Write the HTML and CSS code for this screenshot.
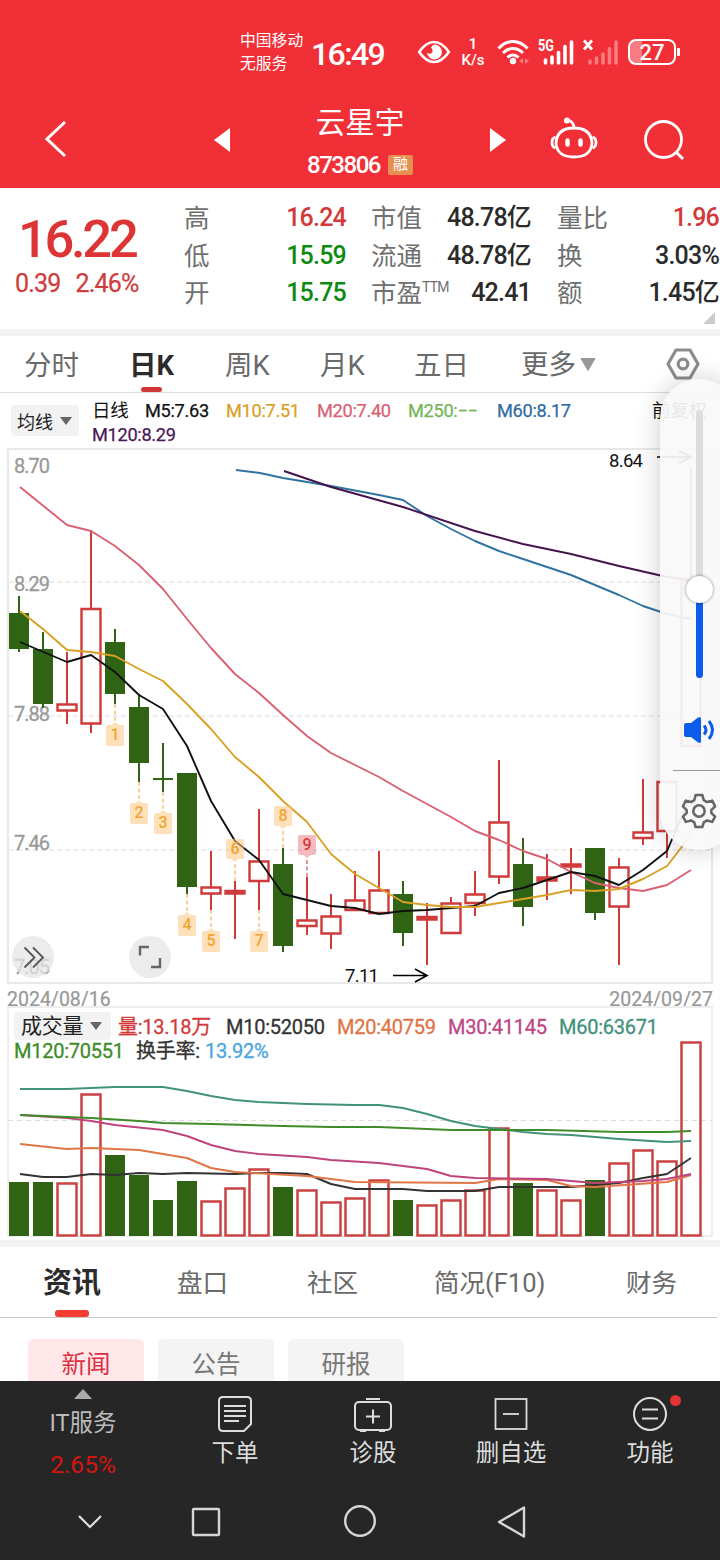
FILE: index.html
```html
<!DOCTYPE html>
<html lang="zh-CN">
<head>
<meta charset="utf-8">
<title>云星宇 873806</title>
<link rel="stylesheet" href="styles.css">
</head>
<body>
<div class="app">
  <header class="top">
    <div class="status">
      <div class="carrier"><span>中国移动</span><span>无服务</span></div>
      <div class="clock">16:49</div>
      <svg class="eye" width="34" height="26" viewBox="0 0 34 26"><path d="M2.200 13Q9 3 17 3t14.800 10Q25 23 17 23T2.200 13z" fill="none" stroke="#fff" stroke-width="2.600"/><path d="M18 5.500a7.500 7.500 0 1 1-8 8c2 2 5 1.500 5.500-1 .4-2-.5-3-1.500-4 1-1.500 2-2.800 4-3z" fill="#fff"/></svg>
      <div class="speed"><span>1</span><span>K/s</span></div>
      <svg class="wifi" width="32" height="26" viewBox="0 0 32 26"><g fill="none" stroke="#fff" stroke-width="3"><path d="M1.500 9.500Q8 2.500 16 2.500t14.500 7M6 14q4.500-4.500 10-4.500T26 14M10.500 18.500q2.500-2.500 5.500-2.500t5.500 2.500"/></g><circle cx="16" cy="22" r="3.200" fill="#fff"/><path d="M26 19v6l-4-3zM28 19v6l4-3z" fill="#f77b80"/></svg>
      <svg class="sig" width="36" height="28" viewBox="0 0 36 28"><g stroke="#fff" stroke-width="3.600" stroke-linecap="round"><path d="M7.500 22v3M14 19v6M20.500 14.500V25M27 8.500V25M33.500 4v21"/></g><text x="0" y="13" class="sig-text" textLength="16" lengthAdjust="spacingAndGlyphs">5G</text></svg>
      <svg class="sig2" width="36" height="28" viewBox="0 0 36 28"><g stroke="#f77b80" stroke-width="3.600" stroke-linecap="round"><path d="M7 23v2M13.500 20v5M20 16v9M26.500 10.500V25M33 4v21"/></g><path d="M1 2.500l8 9M9 2.500l-8 9" stroke="#fff" stroke-width="2.800"/></svg>
      <div class="battery">27</div>
    </div>
    <div class="titlebar">
      <svg class="back" width="24" height="40" viewBox="0 0 24 40"><path d="M21 3L3 20l18 17" fill="none" stroke="#fff" stroke-width="3"/></svg>
      <svg class="prev" width="16" height="24" viewBox="0 0 16 24"><path d="M16 0v24L0 12z" fill="#fff"/></svg>
      <div class="name"><h1>云星宇</h1><p><span class="code">873806</span><span class="tag">融</span></p></div>
      <svg class="next" width="16" height="24" viewBox="0 0 16 24"><path d="M0 0v24l16-12z" fill="#fff"/></svg>
      <svg class="robot" width="48" height="44" viewBox="0 0 48 44"><g fill="none" stroke="#fff" stroke-width="2.800"><path d="M24 11q17 0 18 15-1 14-18 14T6 26q1-15 18-15zM24 11q0-6-6-8"/><path d="M5.500 20q-3.500 1-3.500 5.500T5.500 31M42.500 20q3.500 1 3.500 5.500T42.500 31"/></g><circle cx="17" cy="3.500" r="3" fill="#fff"/><path d="M17.500 23.500v4M30.500 23.500v4" stroke="#fff" stroke-width="4.500" stroke-linecap="round"/></svg>
      <svg class="search" width="42" height="42" viewBox="0 0 42 42"><circle cx="20.500" cy="20.500" r="18" fill="none" stroke="#fff" stroke-width="2.800"/><path d="M33 33l7 7" stroke="#fff" stroke-width="3"/></svg>
    </div>
  </header>

  <section class="quote">
    <div class="price"><div class="last">16.22</div><div class="chg"><span>0.39</span><span>2.46%</span></div></div>
    <dl class="stats">
      <dt>高</dt><dd class="up">16.24</dd><dt>市值</dt><dd>48.78亿</dd><dt>量比</dt><dd class="up">1.96</dd>
      <dt>低</dt><dd class="down">15.59</dd><dt>流通</dt><dd>48.78亿</dd><dt>换</dt><dd>3.03%</dd>
      <dt>开</dt><dd class="down">15.75</dd><dt>市盈<sup>TTM</sup></dt><dd>42.41</dd><dt>额</dt><dd>1.45亿</dd>
    </dl>
    <i class="corner"></i>
  </section>

  <nav class="periods">
    <span>分时</span><span class="on">日K</span><span>周K</span><span>月K</span><span>五日</span><span class="more">更多<svg width="16" height="13" viewBox="0 0 16 13"><path d="M1 .5h14L8 12.500z" fill="#999" stroke="#999"/></svg></span>
    <svg class="hex" width="34" height="34" viewBox="0 0 34 34"><g fill="none" stroke="#8c8c8c" stroke-width="3.200" stroke-linejoin="round"><path d="M10 3h14l8 14-8 14H10L2 17z"/><circle cx="17" cy="17" r="4.800"/></g></svg>
  </nav>

  <section class="ma">
    <div class="drop">均线<i></i></div>
    <div class="ma-list">
      <div class="ma-row"><span class="cn">日线</span><span>M5:7.63</span><span class="c10">M10:7.51</span><span class="c20">M20:7.40</span><span class="c250">M250:−−</span><span class="c60">M60:8.17</span><span class="cn adj">前复权</span></div>
      <div class="ma-row"><span class="c120">M120:8.29</span></div>
    </div>
  </section>

  <svg class="kline" width="720" height="538" viewBox="0 448 720 538">
    <g fill="none" stroke="#e8e8e8"><path d="M8 449H712V983H8z" stroke-width="2"/><path d="M9 582H711M9 716H711M9 850H711" stroke-width="1.500" stroke-dasharray="5 3"/></g>
    <g class="axis"><text x="14" y="473" textLength="36">8.70</text><text x="14" y="591" textLength="36">8.29</text><text x="14" y="721" textLength="36">7.88</text><text x="14" y="850" textLength="36">7.46</text><text x="14" y="974" textLength="36">7.05</text></g>
    <g stroke="#cf3a3a" stroke-width="2" fill="none">
      <path d="M67 652V704M67 711V724M91 530V609M91 724V733M211 851V887M211 894V910M235 881V939M259 809V861M259 881V910M307 877V920M307 926V935M331 894V916M331 934V949M355 871V900M379 851V890M427 903V965M451 897V903M475 871V894M475 903V916M499 760V822M499 877V884M547 854V900M571 848V894M619 858V867M619 906V965M643 779V832M643 838V845M667 831V858M691 467V581"/>
      <path stroke-width="2.400" d="M57.500 704.500h19v6h-19zM81.500 609h19v114.500h-19zM201.500 887.500h19v6h-19zM249.500 861.500h19v19.500h-19zM297.500 920.500h19v5.500h-19zM321.500 916.500h19v17h-19zM345.500 900.500h19v9.500h-19zM369.500 890.500h19v22.500h-19zM441.500 903.500h19v29.500h-19zM465.500 894.500h19v8.500h-19zM489.500 822.500h19v54h-19zM609.500 867.500h19v39h-19zM633.500 832.500h19v5.500h-19zM657.500 782h19v49h-19zM681.500 581h19v165h-19z"/>
      <path stroke-width="2.400" fill="#f25555" d="M225.500 891h19v2.500h-19zM417.500 917h19v2.500h-19zM537.500 877.500h19v3h-19zM561.500 864.500h19v2h-19z"/>
    </g>
    <g fill="#2f6414">
      <path d="M9 613h20v36H9zM33 649h20v55H33zM105 642h20v52h-20zM129 707h20v56h-20zM153 778h20v2h-20zM177 773h20v114h-20zM273 864h20v82h-20zM393 894h20v39h-20zM513 864h20v43h-20zM585 848h20v65h-20z"/>
      <path stroke="#2f6414" stroke-width="2" d="M19 596v56M43 632v76M115 629v75M139 694v88M163 743v49M187 880v14M283 848v104M403 881v65M523 838v88M595 900v20"/>
    </g>
    <g class="lines">
      <polyline stroke="#2f739f" points="236,470 260,473 283,478 331,486 379,495 403,500 427,516 451,529 475,541 499,551 523,559 571,575 595,585 619,595 643,606 667,614 691,619"/>
      <polyline stroke="#45144d" points="284,471 331,487 403,507 475,531 523,544 571,554 619,566 667,577 691,580"/>
      <polyline stroke="#da6072" points="20,487 67,525 91,531 115,546 139,565 163,589 187,619 211,648 235,674 259,693 283,715 307,736 331,753 355,765 379,777 403,791 427,804 451,817 475,831 499,840 523,851 547,859 571,872 595,883 619,888 643,891 667,885 691,870"/>
      <polyline stroke="#111" points="20,642 67,662 91,655 115,672 139,695 163,709 187,746 211,801 235,841 259,860 283,894 307,900 331,906 355,908 379,914 403,911 427,910 451,908 475,906 499,893 523,888 547,880 571,872 595,876 619,885 643,870 667,851 691,795"/>
      <polyline stroke="#d9a025" points="20,611 43,629 67,650 91,652 115,656 139,669 163,681 187,704 211,729 235,757 259,777 283,801 307,822 331,854 355,874 379,888 403,902 427,905 451,907 475,907 499,903 523,899 547,895 571,890 595,891 619,889 643,879 667,866 691,835"/>
    </g>
    <g fill="none" stroke-width="1.700" stroke-dasharray="4 2.500"><path stroke="#f6c98c" d="M115 704v18M139 782v18M163 792v18M187 894v18M211 910v18M259 910v18M235 881v-19M283 848v-19"/><path stroke="#e08585" d="M307 877v-19"/></g>
    <defs>
      <path id="up" d="M0 0l3.500 3H7q2 0 2 2v17q0 2-2 2H-7q-2 0-2-2V5q0-2 2-2h3.500z"/>
      <path id="dn" d="M0 0l3.500-3H7q2 0 2-2v-16q0-2-2-2H-7q-2 0-2 2v16q0 2 2 2h3.500z"/>
    </defs>
    <g fill="#fdc982" fill-opacity=".55"><use href="#up" x="115" y="722"/><use href="#up" x="139" y="800"/><use href="#up" x="163" y="810"/><use href="#up" x="187" y="912"/><use href="#up" x="211" y="928"/><use href="#up" x="259" y="928"/><use href="#dn" x="235" y="862"/><use href="#dn" x="283" y="829"/></g>
    <use href="#dn" x="307" y="858" fill="#ea7a7f" fill-opacity=".5"/>
    <g class="nine"><text x="115" y="740">1</text><text x="139" y="818">2</text><text x="163" y="828">3</text><text x="187" y="930">4</text><text x="211" y="946">5</text><text x="235" y="854">6</text><text x="259" y="946">7</text><text x="283" y="821">8</text><text x="307" y="850" class="hot">9</text></g>
    <g class="mark"><text x="609" y="467" textLength="34">8.64</text><text x="345" y="982" textLength="34">7.11</text></g>
    <path d="M393 975.500h33M415 969l12 6.500-12 6.500M657 457h33M679 451l12 6-12 6" fill="none" stroke="#000" stroke-width="1.700"/>
    <g fill="#e6e6e6" fill-opacity=".75"><circle cx="33" cy="957" r="21"/><circle cx="150" cy="957" r="21"/></g>
    <path d="M24.500 947.500l10 10-10 10M33 947.500l10 10-10 10" fill="none" stroke="#555" stroke-width="1.800"/>
    <path d="M140 955.500v-8.500h9M151 967h9v-9" fill="none" stroke="#666" stroke-width="2.400"/>
  </svg>

  <div class="dates"><span>2024/08/16</span><span>2024/09/27</span></div>

  <section class="vol">
    <div class="vol-row first"><span class="drop">成交量<i></i></span><span class="vred">量:13.18万</span><span>M10:52050</span><span class="v20">M20:40759</span><span class="v30">M30:41145</span><span class="v60">M60:63671</span></div>
    <div class="vol-row second"><span class="v120">M120:70551</span><span>换手率:</span><span class="rate">13.92%</span></div>
    <svg class="bars" width="720" height="176" viewBox="0 1062 720 176">
      <path d="M8 1236V1007H712V1236z" fill="none" stroke="#eee" stroke-width="2"/>
      <path d="M8 1120.500H712" stroke="#ddd" stroke-dasharray="5 4"/>
      <path fill="#2f6414" d="M9 1182h20v54H9zM33 1182h20v54H33zM105 1155h20v81h-20zM129 1175h20v61h-20zM153 1200h20v36h-20zM177 1181h20v55h-20zM273 1187h20v49h-20zM393 1200h20v36h-20zM513 1183h20v53h-20zM585 1180h20v56h-20z"/>
      <path fill="none" stroke="#ca4343" stroke-width="2.500" d="M57.500 1183.500h19v52h-19zM81.500 1094.500h19v141h-19zM201.500 1201.500h19v34h-19zM225.500 1188.500h19v47h-19zM249.500 1169.500h19v66h-19zM297.500 1190.500h19v45h-19zM321.500 1202.500h19v33h-19zM345.500 1198.500h19v37h-19zM369.500 1180.500h19v55h-19zM417.500 1205.500h19v30h-19zM441.500 1200.500h19v35h-19zM465.500 1190.500h19v45h-19zM489.500 1128.500h19v107h-19zM537.500 1190.500h19v45h-19zM561.500 1200.500h19v35h-19zM609.500 1163.500h19v72h-19zM633.500 1150.500h19v85h-19zM657.500 1161.500h19v74h-19zM681.500 1042.500h19v193h-19z"/>
      <g class="lines">
        <polyline stroke="#333" points="20,1174 43,1177 67,1177 91,1174 115,1175 139,1173 163,1174 187,1173 235,1174 259,1173 283,1173 307,1174 331,1184 355,1189 403,1189 427,1191 475,1191 499,1187 571,1187 619,1183 643,1178 667,1174 691,1158"/>
        <polyline stroke="#e07546" points="20,1144 67,1149 91,1148 139,1150 187,1158 211,1168 235,1172 307,1176 355,1182 475,1183 499,1179 547,1180 571,1186 595,1187 667,1182 691,1175"/>
        <polyline stroke="#be457c" points="20,1115 67,1118 91,1121 115,1125 163,1130 187,1136 211,1145 235,1151 259,1154 307,1157 331,1160 379,1163 427,1169 451,1176 475,1178 547,1179 571,1181 595,1183 643,1181 667,1179 691,1174"/>
        <polyline stroke="#42927a" points="20,1089 67,1089 115,1087 163,1087 187,1091 211,1096 235,1100 259,1102 307,1104 355,1105 379,1105 403,1108 427,1114 451,1121 475,1126 499,1129 523,1132 547,1134 571,1135 619,1139 667,1142 691,1141"/>
        <polyline stroke="#408b2a" points="20,1115 91,1118 139,1121 163,1123 211,1124 283,1126 331,1127 379,1127 451,1130 547,1130 619,1132 667,1132 691,1131"/>
      </g>
    </svg>
  </section>

  <nav class="info-tabs"><span class="on">资讯</span><span>盘口</span><span>社区</span><span>简况(F10)</span><span>财务</span></nav>
  <div class="chips"><span class="on">新闻</span><span>公告</span><span>研报</span></div>

  <footer class="dock">
    <div class="actions">
      <div class="index"><svg width="18" height="10" viewBox="0 0 18 10"><path d="M9 0l9 10H0z" fill="#aaa"/></svg><span>IT服务</span><b>2.65%</b></div>
      <div class="act"><svg width="40" height="38" viewBox="0 0 40 38"><g fill="none" stroke="#ddd" stroke-width="2"><path d="M8 2h24q4 0 4 4v23l-7 7H8q-4 0-4-4V6q0-4 4-4z"/><path d="M9 11h22M9 16h22M9 21h22M9 26h15"/></g></svg><span>下单</span></div>
      <div class="act"><svg width="40" height="38" viewBox="0 0 40 38"><g fill="none" stroke="#ddd" stroke-width="2"><rect x="2" y="7" width="36" height="28" rx="4"/><path d="M13 4h14M20 14.500v14M13 21.500h14M7 36h6M26 36h6"/></g></svg><span>诊股</span></div>
      <div class="act"><svg width="40" height="38" viewBox="0 0 40 38"><g fill="none" stroke="#ddd" stroke-width="1.800"><rect x="4.500" y="4" width="31" height="30"/><path d="M12 19h16"/></g></svg><span>删自选</span></div>
      <div class="act"><svg width="40" height="38" viewBox="0 0 40 38"><g fill="none" stroke="#ddd" stroke-width="2"><circle cx="20" cy="19" r="16"/><path d="M12 14.500h16M12 23.500h16"/></g></svg><span>功能</span><i class="dot"></i></div>
    </div>
    <div class="keys">
      <svg width="26" height="36" viewBox="0 0 26 36"><path d="M2 12l11 11 11-11" fill="none" stroke="#ddd" stroke-width="2.200"/></svg>
      <svg width="36" height="36" viewBox="0 0 36 36"><rect x="5" y="5" width="26" height="26" rx="1" fill="none" stroke="#d6d6d6" stroke-width="2.400"/></svg>
      <svg width="36" height="36" viewBox="0 0 36 36"><circle cx="18" cy="17" r="14.800" fill="none" stroke="#d6d6d6" stroke-width="2.400"/></svg>
      <svg width="36" height="36" viewBox="0 0 36 36"><path d="M30 3.500v29L5 18z" fill="none" stroke="#d6d6d6" stroke-width="2.400" stroke-linejoin="round"/></svg>
    </div>
  </footer>

  <aside class="volume-panel">
    <div class="track"><div class="level"></div><div class="knob"></div></div>
    <svg class="speaker" width="34" height="26" viewBox="0 0 34 26"><path d="M1 8q0-2 2-2h5l7-5.500q3-1 3 1v23q0 2-3 1L8 20H3q-2 0-2-2z" fill="#0d5bea"/><path d="M21 8.500q4 4.500 0 9M26 4q7 9 0 18" fill="none" stroke="#0d5bea" stroke-width="3"/></svg>
    <hr>
    <svg class="gear" width="34" height="36" viewBox="0 0 36 38"><g fill="none" stroke="#666" stroke-width="2.700" stroke-linejoin="round"><path d="M14.500 2h7l1.500 5.500 3.500 2 5.500-1.500 3 6-4 4v3l4 4-3 5.500-5.500-1.500-3.500 2-1.500 5h-7L13 31l-3.500-2L4 30.500 1 25l4-4v-3l-4-4 3-6 5.500 1.500 3.500-2z"/><circle cx="18" cy="19" r="6"/></g></svg>
  </aside>
</div>
</body>
</html>
```
FILE: styles.css
```css
* { box-sizing: border-box; }
body { margin: 0; background: #fff; font-family: Roboto, "Noto Sans CJK SC", sans-serif; }
h1, p, dl, dd { margin: 0; }
svg { display: block; flex: none; overflow: visible; }
.app { position: relative; width: 720px; height: 1560px; overflow: hidden; display: flex; flex-direction: column; color: #333; white-space: nowrap; }
.app > * { flex: none; }

.top { height: 188px; background: #f12f37; color: #fff; }
.status { display: flex; align-items: center; height: 104px; padding-left: 240px; }
.carrier { display: flex; flex-direction: column; width: 71px; font-size: 15.800px; line-height: 23px; }
.clock { width: 106px; font-size: 32px; font-weight: 500; letter-spacing: -1.600px; line-height: 34px; padding-top: 3px; }
.speed { display: flex; flex-direction: column; align-items: center; gap: 2px; width: 26px; margin-left: 9px; font-size: 15px; line-height: 14px; font-weight: 500; }
.speed span { height: 14px; }
.wifi { margin-left: 11px; }
.sig { margin-left: 9px; }
.sig-text { font: 700 16px Roboto, sans-serif; fill: #fff; }
.sig2 { margin-left: 9px; }
.battery { position: relative; width: 48px; height: 26px; margin-left: 9px; border: 2px solid #fff; border-radius: 8px; background: linear-gradient(90deg, #f77c81 28%, transparent 28%); font-size: 22px; line-height: 23px; font-weight: 500; text-align: center; }
.battery::after { content: ""; position: absolute; right: -6px; top: 7px; width: 3px; height: 8px; border-radius: 1px; background: #fff; }
.titlebar { display: grid; grid-template-columns: 44px 170px 62px 168px 45px 62px 92px 42px; height: 84px; }
.back { grid-column: 2; margin-top: 15px; }
.prev { grid-column: 3; margin-top: 24px; }
.name { grid-column: 4; text-align: center; }
.name h1 { font-size: 29.500px; line-height: 38px; font-weight: 400; }
.name p { display: flex; justify-content: center; align-items: center; height: 46px; }
.code { font-size: 24px; font-weight: 500; letter-spacing: -1.500px; }
.tag { margin-left: 8px; width: 25px; height: 20px; border-radius: 2px; background: #e5904f; font-size: 15px; line-height: 19px; }
.next { grid-column: 5; margin: 24px 0 0 46px; }
.robot { grid-column: 6; margin: 13px 0 0 61px; }
.search { grid-column: 7; margin: 15px 0 0 92px; }

.quote { position: relative; display: grid; grid-template-columns: 184px 536px; height: 148px; border-bottom: 7px solid #f3f3f3; }
.price { color: #dd3436; }
.last { padding: 23px 0 0 18px; font-size: 52.500px; line-height: 56px; font-weight: 500; letter-spacing: -3.300px; }
.chg { display: flex; gap: 15px; padding: 2px 0 0 15px; font-size: 25px; line-height: 30px; letter-spacing: -.8px; color: #cf3e3e; font-weight: 400; -webkit-text-stroke: .25px; }
.stats { display: grid; grid-template-columns: 87px 75px 25px 75px 85px 26px 60px 102px; grid-template-rows: repeat(3, 37.500px); padding-top: 11px; }
.stats dt, .stats dd { line-height: 38px; }
.stats dt { font-size: 25.500px; color: #707070; font-weight: 400; }
.stats dd { text-align: right; font-size: 25px; font-weight: 500; letter-spacing: -.8px; color: #2b2b2b; }
.stats dt:nth-of-type(3n+1) { grid-column: 1; }
.stats dd:nth-of-type(3n+1) { grid-column: 2; }
.stats dt:nth-of-type(3n+2) { grid-column: 4; }
.stats dd:nth-of-type(3n+2) { grid-column: 5; }
.stats dt:nth-of-type(3n) { grid-column: 7; }
.stats dd:nth-of-type(3n) { grid-column: 8; }
.stats sup { font-size: 14px; line-height: 0; vertical-align: 10px; letter-spacing: -.8px; }
.stats dd.up { color: #d23a3a; }
.stats dd.down { color: #0e8a10; }
.corner { position: absolute; right: 5px; bottom: 5px; border-left: 12px solid transparent; border-bottom: 12px solid #ccc; }

.periods { display: grid; grid-template-columns: 105px 96px 95px 94px 107px 145px 34px; height: 57px; padding-left: 24px; border-bottom: 1px solid #ddd; font-size: 27.500px; line-height: 59px; font-weight: 400; color: #6a6a6a; }
.periods span { position: relative; }
.periods .on { font-weight: 700; color: #2b2b2b; }
.periods .on::after { content: ""; position: absolute; left: 12px; top: 51px; width: 21px; height: 5px; border-radius: 3px; background: #d13536; }
.periods .more { display: flex; align-items: center; gap: 4px; height: 57px; }
.hex { margin-top: 11px; }

.ma { display: flex; height: 55px; padding-left: 11px; }
.drop { display: flex; align-items: center; background: #f2f2f2; border-radius: 4px; color: #222; }
.drop i { border: 6.500px solid transparent; border-top: 8px solid #666; border-bottom: 0; }
.ma > .drop { width: 68px; height: 31px; margin-top: 12px; padding-left: 6px; gap: 7px; font-size: 18px; }
.ma-list { padding: 6px 0 0 13px; }
.ma-row { display: grid; grid-template-columns: 53px 81px 91px 91px 89px 155px auto; height: 24px; line-height: 24px; font-size: 18.500px; letter-spacing: -.3px; color: #111; }
.ma-row span:not(.cn) { font-weight: 400; font-size: 18.200px; -webkit-text-stroke: .25px; }
.c10 { color: #d9a025; } .c20 { color: #da6072; } .c250 { color: #72b558; } .c60 { color: #2f6d9f; } .c120 { color: #4c1757; }

.axis text { font: 400 20px Roboto, sans-serif; fill: #999; stroke: #999; stroke-width: .3px; }
.kline { height: 538px; }
.lines polyline { fill: none; stroke-width: 1.900; stroke-linejoin: round; }
.nine text { font: 500 16px Roboto, sans-serif; fill: #f0a431; text-anchor: middle; }
.nine .hot { fill: #d83a3c; }
.mark text { font: 400 18.500px Roboto, sans-serif; fill: #111; }

.dates { display: flex; justify-content: space-between; height: 20px; padding: 2px 7px 0; font-size: 19.500px; line-height: 23px; color: #999; letter-spacing: 0; -webkit-text-stroke: .25px; }

.vol { height: 241px; border-bottom: 7px solid #f3f3f3; display: flex; flex-direction: column; }
.vol-row { display: grid; position: relative; z-index: 1; padding-left: 14px; font-size: 20px; letter-spacing: -.25px; }
.first { grid-template-columns: 104px 108px 111px 111px 111px auto; height: 34px; padding-top: 6px; line-height: 30px; }
.first .drop { width: 97px; height: 28px; padding-left: 7px; gap: 7px; font-size: 21px; }
.second { grid-template-columns: 122px 69px auto; height: 22px; line-height: 22px; }
.vol-row span:not(.drop) { font-weight: 400; -webkit-text-stroke: .3px; }
.vred { color: #d23a3a; } .v20 { color: #df7443; } .v30 { color: #bf4585; } .v60 { color: #42917b; } .v120 { color: #408b2a; } .rate { color: #4ba5df; }

.info-tabs { display: grid; grid-template-columns: 134px 130px 127px 192px auto; width: 717px; height: 71px; padding-left: 43px; border-bottom: 1px solid #c8c8c8; font-size: 25.500px; line-height: 72px; font-weight: 400; color: #6a6a6a; }
.info-tabs span { position: relative; }
.info-tabs .on { font-size: 29px; font-weight: 700; color: #2b2b2b; }
.info-tabs .on::after { content: ""; position: absolute; left: 12px; top: 63px; width: 34px; height: 7px; border-radius: 3px; background: #f33c32; }
.chips { display: flex; gap: 14px; height: 63px; padding: 21px 0 0 28px; }
.chips span { width: 116px; border-radius: 6px 6px 0 0; background: #f4f4f4; text-align: center; font-size: 24.500px; line-height: 51px; color: #777; }
.chips .on { background: #ffe7ea; color: #dd2f3f; }

.dock { position: relative; height: 179px; background: #262626; color: #ddd; }
.actions { display: grid; grid-template-columns: 166px 138px 138px 138px 140px; height: 117px; }
.index { display: flex; flex-direction: column; align-items: center; padding-top: 8px; font-size: 23.500px; color: #bbb; }
.index span { line-height: 48px; }
.index b { font-size: 24.500px; font-weight: 400; line-height: 36px; color: #d3160f; }
.act { position: relative; display: flex; flex-direction: column; align-items: center; padding-top: 14px; font-size: 23.500px; line-height: 40px; }
.dot { position: absolute; right: 39px; top: 14px; width: 11px; height: 11px; border-radius: 50%; background: #e33434; }
.keys { display: grid; grid-template-columns: 111px 154px 152px 36px; height: 62px; padding: 6px 0 0 77px; }

.volume-panel { position: absolute; left: 660px; top: 379px; width: 78px; height: 471px; border-radius: 39px; background: rgba(249,249,249,.93); box-shadow: 0 0 26px rgba(0,0,0,.2); }
.track { position: absolute; left: 36px; top: 31px; width: 7px; height: 268px; border-radius: 4px; background: #ddd; }
.level { position: absolute; left: 0; bottom: 0; width: 7px; height: 86px; border-radius: 4px; background: #0d5bea; }
.knob { position: absolute; left: -10px; top: 166px; width: 27px; height: 27px; border-radius: 50%; background: #fff; box-shadow: 0 0 3px rgba(0,0,0,.5); }
.speaker { position: absolute; left: 23px; top: 338px; }
.volume-panel hr { position: absolute; left: 13px; top: 391px; width: 60px; margin: 0; border: 0; border-top: 1px solid #999; }
.gear { position: absolute; left: 22px; top: 414px; }
```
